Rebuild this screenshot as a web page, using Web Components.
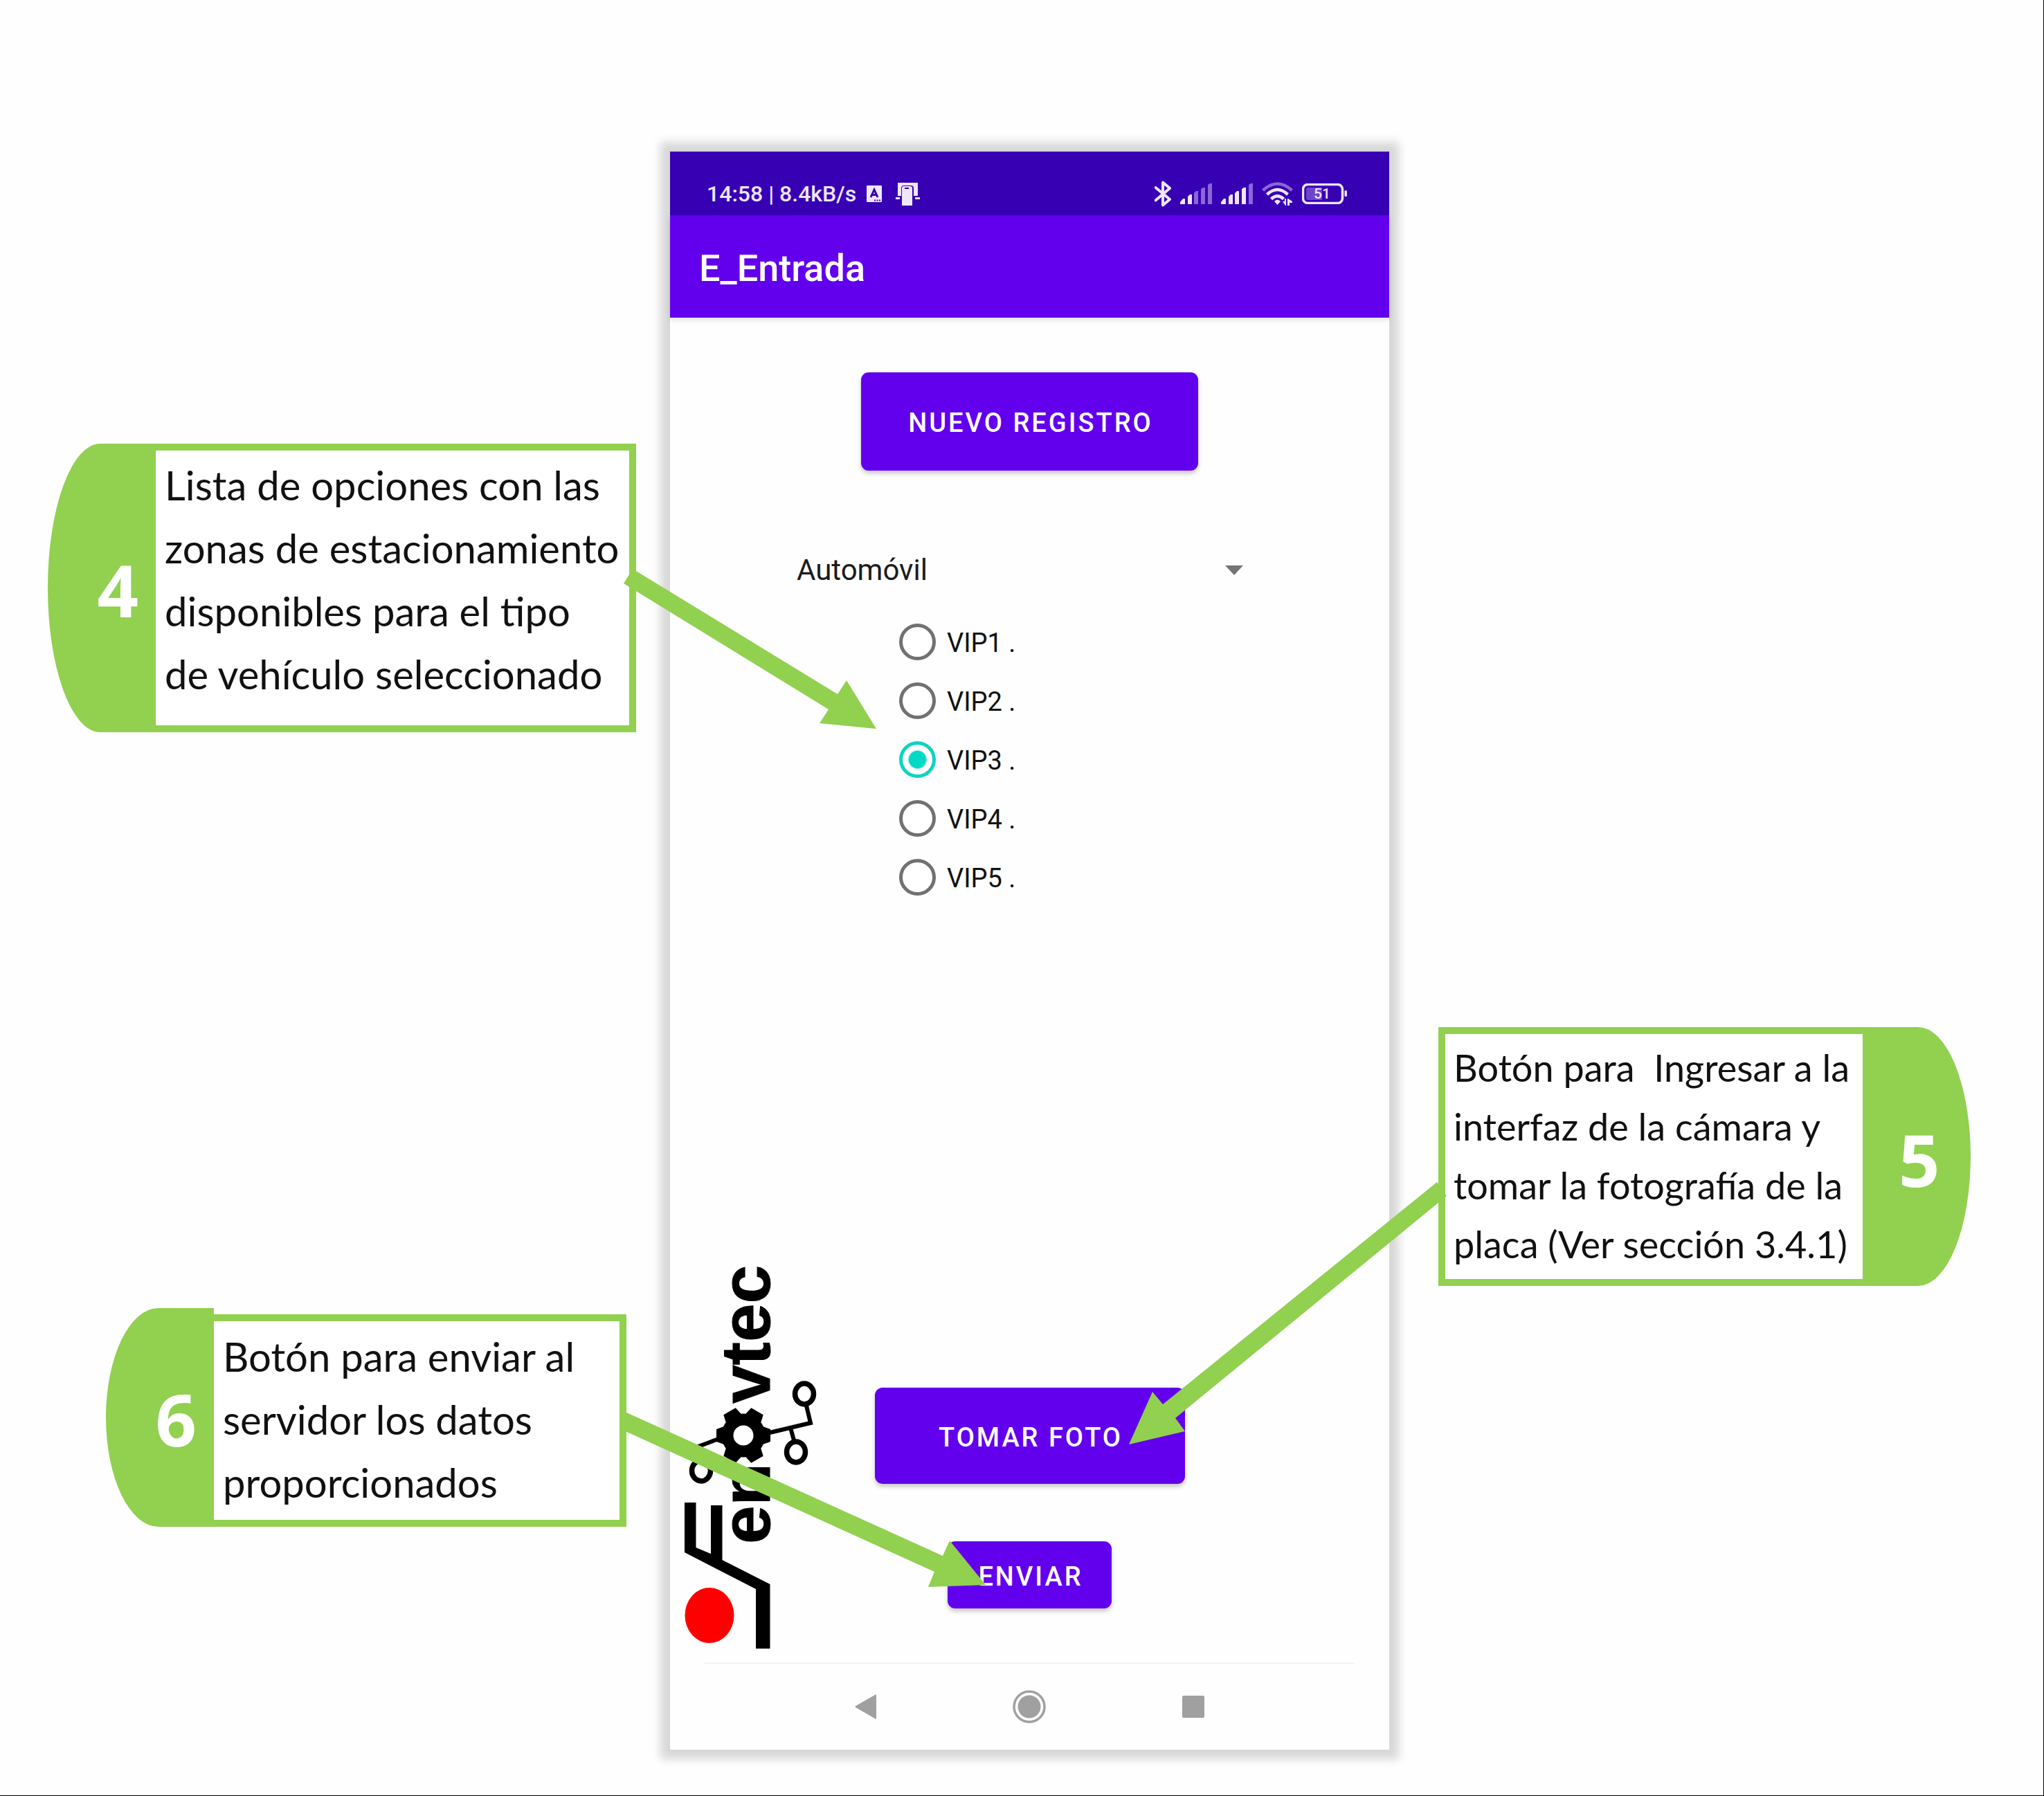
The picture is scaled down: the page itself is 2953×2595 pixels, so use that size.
<!DOCTYPE html>
<html lang="es">
<head>
<meta charset="utf-8">
<title>E_Entrada</title>
<style>
  html, body { margin: 0; background: #fefefe; }
</style>
</head>
<body>
<guide-page>
  <call-out slot="left" number="4">Lista de opciones con las<br>zonas de estacionamiento<br>disponibles para el tipo<br>de vehículo seleccionado</call-out>
  <call-out slot="left" number="6" class="low">Botón para enviar al<br>servidor los datos<br>proporcionados</call-out>
  <phone-frame slot="phone">
    <status-bar></status-bar>
    <app-bar>E_Entrada</app-bar>
    <entry-form></entry-form>
    <nav-bar></nav-bar>
  </phone-frame>
  <call-out slot="right" number="5" side="right">Botón para&nbsp; Ingresar a la<br>interfaz de la cámara y<br>tomar la fotografía de la<br>placa (Ver sección 3.4.1)</call-out>
</guide-page>

<script>
const define = (name, html) => {
  const template = document.createElement('template');
  template.innerHTML = html;
  customElements.define(name, class extends HTMLElement {
    constructor() {
      super();
      this.attachShadow({ mode: 'open' }).append(template.content.cloneNode(true));
    }
    connectedCallback() {
      const n = this.shadowRoot.querySelector('[data-number]');
      if (n) n.textContent = this.getAttribute('number');
      const l = this.shadowRoot.querySelector('[data-label]');
      if (l) l.textContent = this.getAttribute('label');
      const r = this.shadowRoot.querySelector('input');
      if (r) r.checked = this.hasAttribute('checked');
    }
  });
};

define('guide-page', `
<style>
  :host { display: grid; grid-template-columns: 968fr 1039fr 945fr; align-items: start; position: relative;
    box-sizing: border-box; min-height: 100vh; border-right: 1px solid #000; border-bottom: 1px solid #000; background: #fefefe; }
  .col { display: flex; flex-direction: column; }
  .left { padding-top: 641px; gap: 832px; }
  .left ::slotted(call-out) { margin: 0 49px 0 69px; }
  .left ::slotted(.low) { margin: 0 63px 0 153px; --lip: 9px; }
  .mid { padding-top: 219px; }
  .right { padding-top: 1484px; }
  .right ::slotted(call-out) { margin: 0 105px 0 71px; --size: 54px; --lead: 85px; }
  svg { position: absolute; left: 0; top: 0; width: 100%; pointer-events: none; }
</style>
<div class="col left"><slot name="left"></slot></div>
<div class="col mid"><slot name="phone"></slot></div>
<div class="col right"><slot name="right"></slot></div>
<svg viewBox="0 0 2952 2594" fill="#92d050" aria-hidden="true">
  <path d="M901 843L914 822L1210 1003L1223 983L1266 1053L1184 1045L1197 1025Z"/>
  <path d="M2076 1708L2090 1728L1698 2049L1712 2068L1631 2087L1665 2011L1680 2029Z"/>
  <path d="M903 2040L1362 2248L1372 2226L1424 2290L1341 2293L1350 2271L899 2066Z"/>
</svg>`);

define('call-out', `
<style>
  :host { display: flex; color: #111; font-family: Lato, sans-serif; }
  :host([side="right"]) { flex-direction: row-reverse; }
  .tab { flex: none; width: 156px; box-sizing: border-box; display: flex; align-items: center; justify-content: flex-end;
    padding: 4px 25px 0 0; background: #92d050; color: #fff; font: 700 104px/104px "Open Sans", sans-serif;
    border-radius: 76px 0 0 76px / 50% 0 0 50%; }
  :host([side="right"]) .tab { justify-content: flex-start; padding: 8px 0 0 52px; border-radius: 0 76px 76px 0 / 0 50% 50% 0; }
  .box { flex: 1; box-sizing: border-box; margin-top: var(--lip, 0); border: 10px solid #92d050; border-left-width: 0;
    padding: 4px 0 29px 13px; background: #fff; }
  :host([side="right"]) .box { border-left-width: 10px; border-right-width: 0; padding: 6px 0 8px 12px; }
  :host(.low) .box { padding: 5px 0 9px 13px; }
  p { margin: 0; font-size: var(--size, 58px); line-height: var(--lead, 91px); white-space: nowrap; }
</style>
<div class="tab" data-number></div>
<div class="box"><p><slot></slot></p></div>`);

define('phone-frame', `
<style>
  :host { display: flex; flex-direction: column; aspect-ratio: 1039 / 2309; background: #fefefe;
    box-shadow: 0 0 12px 14px #d8d8d8; font-family: Roboto, sans-serif; }
  ::slotted(entry-form) { flex: 1; }
</style>
<slot></slot>`);

define('status-bar', `
<style>
  :host { display: flex; align-items: center; justify-content: space-between; box-sizing: border-box; height: 92px;
    padding: 30px 61px 0 53px; background: #3700b3; color: #efe6ff; font-size: 32px; font-weight: 500; line-height: 38px; }
  .group { display: flex; align-items: center; gap: 13px; }
  svg { display: block; }
  .apps { gap: 20px; margin-left: 2px; }
</style>
<div class="group"><span>14:58 | 8.4kB/s</span>
  <div class="group apps">
    <svg width="22" height="24" viewBox="0 0 22 24"><rect width="22" height="24" rx="1" fill="#efe6ff"/><path d="M6 17L11 6L16 17M8 13.500h6" fill="none" stroke="#3700b3" stroke-width="3"/><path d="M11 21.500h2m1.500 0h2m1.500 0h2" stroke="#3700b3" stroke-width="2"/></svg>
    <svg width="35" height="34" viewBox="0 0 35 34"><path fill="#efe6ff" d="M3 1h29v19h-6V9q0-4-4-4H12q-4 0-4 4v11H3zM0 22h6v3H0zm28 0h7v3h-7zM9 9q0-3 3-3h9q3 0 3 3v25H9z"/><path d="M13 9h6" stroke="#3700b3" stroke-width="2"/></svg>
  </div>
</div>
<div class="group">
  <svg width="24" height="38" viewBox="0 0 24 38"><path d="M1.500 10L22 27L12 35.500V2.500L22 11L1.500 28.500" fill="none" stroke="#efe6ff" stroke-width="4" stroke-linejoin="round" stroke-linecap="round"/></svg>
  <svg width="46" height="30" viewBox="0 0 46 30" fill="#efe6ff"><path d="M0 30v-3l4-5h3v8zM11 30V19l3-3h3v14z"/><path opacity=".45" d="M20 30V14l3-3h3v19zM30 30V8l3-2h3v24zM40 30V2l3-2h3v30z"/></svg>
  <svg width="46" height="30" viewBox="0 0 46 30" fill="#efe6ff"><path d="M0 30v-3l4-5h3v8zM11 30V19l3-3h3v14zM20 30V14l3-3h3v19zM30 30V8l3-2h3v24z"/><path opacity=".45" d="M40 30V2l3-2h3v30z"/></svg>
  <svg width="45" height="34" viewBox="0 0 45 34" fill="none" stroke="#efe6ff" stroke-width="4.500"><path opacity=".45" d="M1.500 12Q22.500-7 43.500 12"/><path d="M7.500 18Q22.500 4 37.500 18M13.500 24.500Q22.500 16 31.500 24.500"/><path stroke="none" fill="#efe6ff" d="M18 28q4.500-5 9 0l-4.500 5zM30 28h3v-4h2v10h-1zM37 24h1l6 4v2h-4v4h-3z"/></svg>
  <svg width="65" height="30" viewBox="0 0 65 30"><rect x="1.500" y="1.500" width="57" height="27" rx="7" fill="none" stroke="#efe6ff" stroke-width="3.500"/><path d="M6 9q0-3 3-3h20v18H9q-3 0-3-3z" fill="#efe6ff" opacity=".3"/><rect x="61.500" y="10" width="3.500" height="9" rx="1.500" fill="#efe6ff"/><text x="29" y="22" text-anchor="middle" font-family="Roboto" font-weight="500" font-size="21" fill="#efe6ff">51</text></svg>
</div>`);

define('app-bar', `
<style>
  :host { display: flex; align-items: center; height: 148px; box-sizing: border-box; padding: 5px 0 0 42px; background: #6200ee; color: #fff;
    box-shadow: 0 3px 8px rgba(0,0,0,.12); }
  h1 { margin: 0; font-size: 54px; font-weight: 500; line-height: 62px; }
</style>
<h1><slot></slot></h1>`);

define('raised-button', `
<style>
  :host { display: block; }
  button { display: block; width: 100%; height: 100%; margin: 0; padding: 4px 0 0 3px; border: 0; border-radius: 11px; background: #6200ee; color: #fff;
    font: 500 38px/44px Roboto, sans-serif; letter-spacing: 3px; box-shadow: 0 4px 6px rgba(0,0,0,.22); }
</style>
<button type="button"><slot></slot></button>`);

define('radio-option', `
<style>
  :host { display: block; }
  label { display: flex; align-items: center; gap: 16px; height: 85px; font-size: 38px; line-height: 44px; color: #111; }
  input { appearance: none; flex: none; width: 53px; height: 53px; box-sizing: border-box; margin: 0; border: 5px solid #717171; border-radius: 50%; background: #fff; }
  input:checked { border-color: #0fd3c0; background: radial-gradient(circle, #03dac5 12px, #fff 14px); }
  span { padding-top: 3px; }
</style>
<label><input type="radio" name="zona"><span data-label></span></label>`);

define('entry-form', `
<style>
  :host { display: flex; flex-direction: column; }
  .new { align-self: center; width: 487px; height: 142px; margin-top: 79px; }
  .picker { display: flex; align-items: center; margin: 100px 211px 18px 183px; height: 87px; }
  select { appearance: none; flex: 1; min-width: 0; border: 0; margin: 0; padding: 0; background: none; color: #1c1c1c; font: 42px/56px Roboto, sans-serif; }
  .zones { display: flex; flex-direction: column; margin-left: 331px; }
  .foot { flex: 1; display: grid; grid-template-columns: 1fr 448px 1fr; align-items: end; }
  .brand { padding: 0 0 19px 20px; }
  .actions { display: flex; flex-direction: column; align-items: center; gap: 83px; padding-bottom: 78px; }
  .photo { width: 448px; height: 139px; }
  .send { width: 237px; height: 97px; }
  svg { display: block; flex: none; }
</style>
<raised-button class="new">NUEVO REGISTRO</raised-button>
<div class="picker">
  <select aria-label="Tipo"><option>Automóvil</option></select>
  <svg width="26" height="14" viewBox="0 0 26 14"><path d="M0 0h26L13 14z" fill="#757575"/></svg>
</div>
<div class="zones">
  <radio-option label="VIP1 ."></radio-option>
  <radio-option label="VIP2 ."></radio-option>
  <radio-option label="VIP3 ." checked></radio-option>
  <radio-option label="VIP4 ."></radio-option>
  <radio-option label="VIP5 ."></radio-option>
</div>
<div class="foot">
  <div class="brand"><enovtec-logo></enovtec-logo></div>
  <div class="actions">
    <raised-button class="photo">TOMAR FOTO</raised-button>
    <raised-button class="send">ENVIAR</raised-button>
  </div>
</div>`);

define('enovtec-logo', `
<style>:host { display: block; } svg { display: block; overflow: visible; }</style>
<svg width="192" height="556" viewBox="988 1828 192 556">
  <ellipse cx="1025" cy="2335" rx="35.500" ry="40" fill="#f00"/>
  <path d="M989 2172h16.500v65l21.500 9v-70h16.500v79l69 35v93h-20.500v-86L989 2244z"/>
  <g transform="rotate(-90)" font-family="Liberation Sans, sans-serif" font-weight="700" font-size="100" stroke="#000" stroke-width="1">
    <text x="-2232" y="1112">en</text>
    <text x="-2029" y="1112">vtec</text>
  </g>
  <g transform="translate(1074 2075)">
    <circle r="23" fill="none" stroke="#000" stroke-width="17"/>
    <path d="M-39-9L-28-13V13L-39 9zM39-9L28-13V13L39 9z"/>
    <path transform="rotate(60)" d="M-40-10L-27-13V13L-40 10zM40-10L27-13V13L40 10z"/>
    <path transform="rotate(120)" d="M-40-10L-27-13V13L-40 10zM40-10L27-13V13L40 10z"/>
  </g>
  <g fill="none" stroke="#000">
    <path stroke-width="6" d="M1038 2080L1009 2091L1013 2110M1112 2071L1171 2057L1165 2032M1142 2064L1147 2082"/>
    <ellipse cx="1013" cy="2126" rx="13.500" ry="15" stroke-width="7.500"/>
    <ellipse cx="1162" cy="2015" rx="13.500" ry="15" stroke-width="7.500"/>
    <ellipse cx="1150" cy="2099" rx="13.500" ry="15" stroke-width="7.500"/>
  </g>
</svg>`);

define('nav-bar', `
<style>
  :host { display: block; }
  nav { display: flex; justify-content: center; align-items: center; gap: 197px; height: 124px; margin: 0 50px; border-top: 2px solid #f2f2f2; }
  button { display: block; margin: 0; padding: 0; border: 0; background: none; }
  svg { display: block; }
</style>
<nav>
  <button type="button" aria-label="Atrás"><svg width="31" height="36" viewBox="0 0 31 36"><path d="M31 1v34q-1 1-2 0L1 19q-1-1 0-2L29 1q1-1 2 0z" fill="#a0a0a0"/></svg></button>
  <button type="button" aria-label="Inicio"><svg width="48" height="48" viewBox="0 0 48 48"><circle cx="24" cy="24" r="22" fill="none" stroke="#a0a0a0" stroke-width="3.500"/><circle cx="24" cy="24" r="16.500" fill="#a0a0a0"/></svg></button>
  <button type="button" aria-label="Recientes"><svg width="32" height="32" viewBox="0 0 32 32"><rect width="32" height="32" rx="2" fill="#a0a0a0"/></svg></button>
</nav>`);
</script>
</body>
</html>
